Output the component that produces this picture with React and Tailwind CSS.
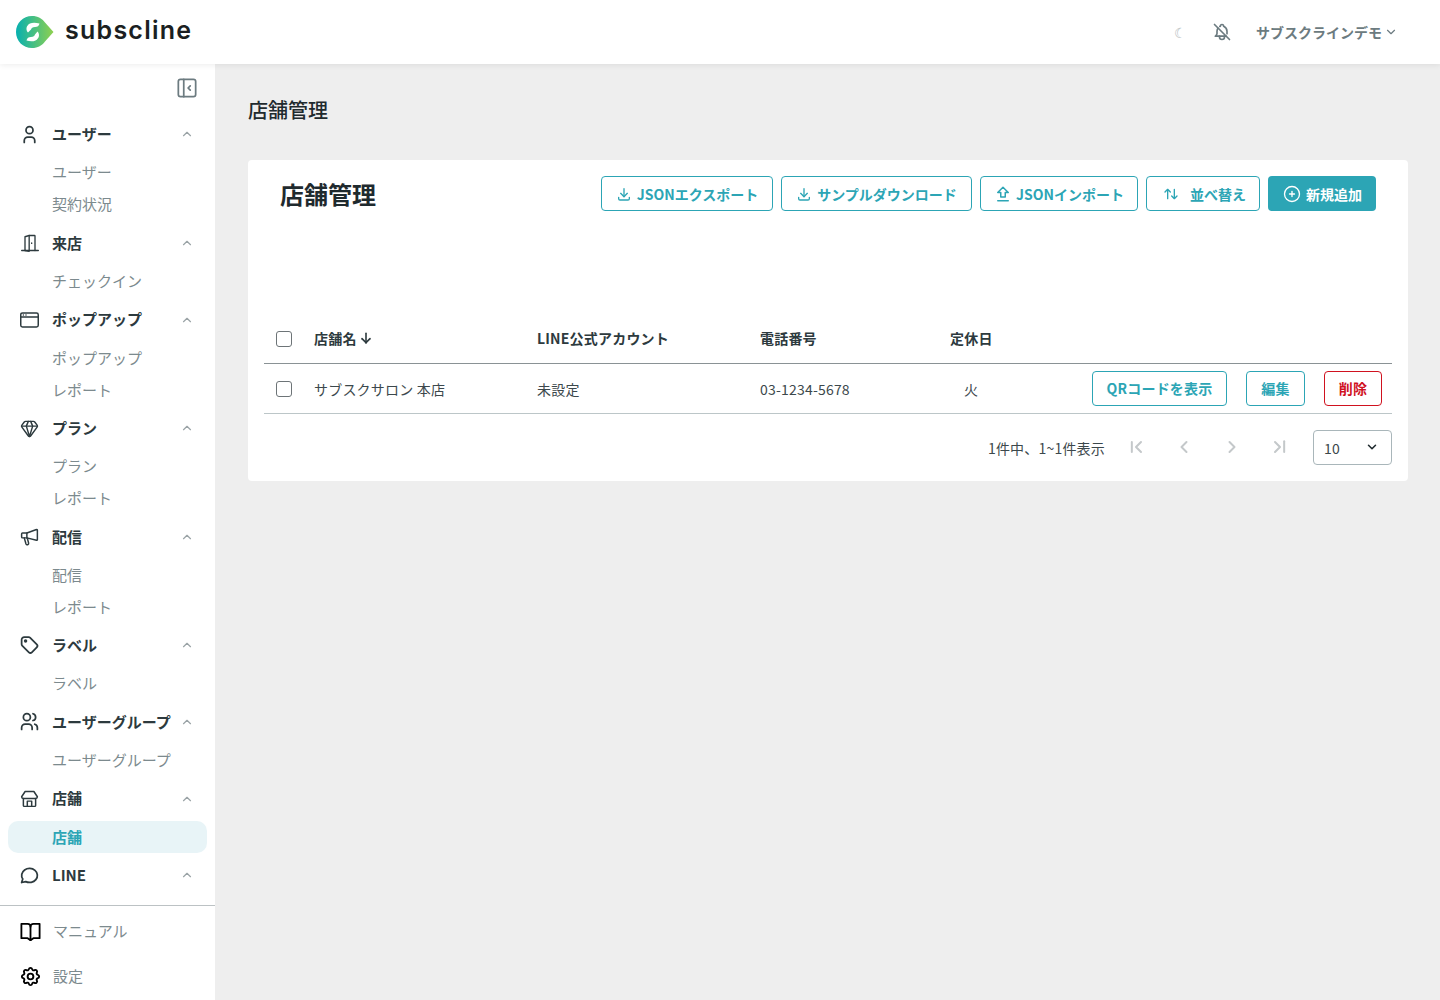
import React from "react"
import {
  TbUser,
  TbTag,
  TbUsers,
  TbMessageCircle,
  TbSettings,
  TbLayoutSidebarLeftCollapse,
  TbBellOff,
  TbChevronUp,
  TbChevronDown,
  TbDownload,
  TbArrowsSort,
  TbCirclePlus,
  TbArrowDown,
  TbChevronLeft,
  TbChevronRight,
  TbChevronLeftPipe,
  TbChevronRightPipe,
} from "react-icons/tb"
import { Gem } from "lucide-react"

const styles = {
  outline: `h-[35px] flex items-center justify-center rounded border border-[#2ca5b5] bg-white text-[#2ca5b5] text-sm font-bold`,
  pager: `w-12 flex justify-center text-[#c4c8ca]`,
}

const Glyph = ({ children, size = 21, stroke = "#2d3a3e", width = 1.7 }) => (
  <svg width={size} height={size} viewBox="0 0 24 24" fill="none" stroke={stroke} strokeWidth={width} strokeLinecap="round" strokeLinejoin="round">
    {children}
  </svg>
)

const DoorIcon = () => (
  <Glyph size={20} width={1.6}>
    <path d="M2 21h20" />
    <path d="M6 21V4.5L11 3h6.5a.5.5 0 0 1 .5.5V21" />
    <path d="M11 3v19l-5-1" />
    <path d="M14 12v.5" />
  </Glyph>
)

const BrowserIcon = () => (
  <Glyph size={22}>
    <rect x="2" y="4" width="20" height="16" rx="2" />
    <path d="M2 8.5h20" />
    <path d="M5 6.3h.01M8 6.3h.01" />
  </Glyph>
)

const MegaphoneIcon = () => (
  <Glyph size={22}>
    <path d="M3 8.5a1 1 0 0 1 1-1h5l11-4a.7.7 0 0 1 1 .7V15a.7.7 0 0 1-1 .7L9 13H4a1 1 0 0 1-1-1Z" />
    <path d="M9 7.5V13" />
    <path d="M6 13l2 7a1.6 1.6 0 0 0 3-1l-1.500-5.500" />
  </Glyph>
)

const StoreIcon = () => (
  <Glyph size={23}>
    <path d="M7 4h10l4 6a2 2 0 0 1-2 2H5a2 2 0 0 1-2-2Z" />
    <path d="M5 12v8a1 1 0 0 0 1 1h12a1 1 0 0 0 1-1v-8" />
    <path d="M9.500 21v-6h5v6" />
  </Glyph>
)

const BookIcon = () => (
  <Glyph size={23} stroke="#000" width={1.9}>
    <path d="M2.500 4h6.500a3 3 0 0 1 3 3 3 3 0 0 1 3-3h6.500v15H15l-3 2-3-2H2.500Z" />
    <path d="M12 7v14" />
  </Glyph>
)

const UploadIcon = () => (
  <Glyph size={18} stroke="currentColor" width={2}>
    <path d="M9 16v-6H5l7-7 7 7h-4v6Z" />
    <path d="M5 21h14" />
  </Glyph>
)

const navGroups = [
  { label: "ユーザー", icon: <TbUser size={21} />, items: ["ユーザー", "契約状況"] },
  { label: "来店", icon: <DoorIcon />, items: ["チェックイン"] },
  { label: "ポップアップ", icon: <BrowserIcon />, items: ["ポップアップ", "レポート"] },
  { label: "プラン", icon: <Gem size={19} strokeWidth={1.8} />, items: ["プラン", "レポート"] },
  { label: "配信", icon: <MegaphoneIcon />, items: ["配信", "レポート"] },
  { label: "ラベル", icon: <TbTag size={22} />, items: ["ラベル"] },
  { label: "ユーザーグループ", icon: <TbUsers size={21} />, items: ["ユーザーグループ"] },
  { label: "店舗", icon: <StoreIcon />, items: ["店舗"], active: "店舗" },
  { label: "LINE", icon: <TbMessageCircle size={21} />, items: [] },
]

const Logo = () => (
  <svg width="38" height="32" viewBox="0 0 38 32">
    <defs>
      <linearGradient id="logoGrad" x1="0" y1="0" x2="1" y2="0">
        <stop offset="0" stopColor="#07b0b0" />
        <stop offset="1" stopColor="#8fd04f" />
      </linearGradient>
    </defs>
    <path d="M16 0C22 0 26 2.500 29 6.500L37.500 16L29 25.500C26 29.500 22 32 16 32C7 32 0 25 0 16S7 0 16 0Z" fill="url(#logoGrad)" />
    <path d="M12 16.500C9.500 14 10 9.500 14 7.500C16.500 6.300 20 6.500 23.500 7.500C23 10 21.500 11 19 11C16.500 11 15.500 12 15 13.500Z" fill="#fff" />
    <path d="M21.500 15.500C24 18 23.500 22.500 19.500 24.500C17 25.700 13.500 25.500 10.500 24.500C11 22 12.500 21 15 21C17.500 21 18.500 20 19 18.500Z" fill="#fff" />
  </svg>
)

const Sidebar = () => (
  <aside className="w-[215px] h-[936px] shrink-0 bg-white flex flex-col overflow-hidden">
    <div className="h-[48.100px] flex items-center justify-end pr-[15px] text-[#6c7b80]">
      <TbLayoutSidebarLeftCollapse size={26} strokeWidth={1.6} />
    </div>
    <nav className="flex-1">
      {navGroups.map((group) => (
        <div key={group.label}>
          <div className="h-[44.600px] flex items-center pl-[19px] pr-[21px] text-[#2d3a3e]">
            <span className="w-[21px] flex justify-center">{group.icon}</span>
            <span className="ml-3 flex-1 text-[15px] font-bold">{group.label}</span>
            <TbChevronUp size={14} className="text-[#9aa3a6]" />
          </div>
          {group.items.map((item) =>
            item === group.active ? (
              <div key={item} className="mx-2 h-8 flex items-center pl-11 rounded-[10px] bg-[#e8f4f7] text-[15px] font-bold text-[#2ca5b5]">
                {item}
              </div>
            ) : (
              <div key={item} className="h-8 flex items-center pl-[52px] text-[15px] text-[#7c8a8e]">
                {item}
              </div>
            ),
          )}
        </div>
      ))}
    </nav>
    <div className="border-t border-[#bcc2c4] pt-[3px] pb-px">
      <div className="h-[45px] flex items-center pl-[19px] text-[15px] text-[#7c8a8e]">
        <BookIcon />
        <span className="ml-[11px]">マニュアル</span>
      </div>
      <div className="h-[45px] flex items-center pl-[19px] text-[15px] text-[#7c8a8e]">
        <TbSettings size={23} className="text-black" />
        <span className="ml-[11px]">設定</span>
      </div>
    </div>
  </aside>
)

const Checkbox = () => <span className="block w-4 h-4 rounded-[3px] border border-[#6d7477] bg-white" />

const App = () => {
  return (
    <div className="w-[1440px] h-[1000px] overflow-hidden bg-[#eeeeee] text-[#2d3a3e] font-['Noto_Sans_CJK_JP','Noto_Sans',sans-serif]">
      <header className="relative z-10 h-16 bg-white shadow-[0_1px_6px_rgba(0,0,0,0.08)] flex items-center pl-4 pr-[42px]">
        <Logo />
        <span className="ml-[11px] -mt-[3px] text-[25px] font-semibold tracking-[1.250px] text-[#1b1f22] font-['Inter',sans-serif]">subscline</span>
        <div className="ml-auto flex items-center text-[#6c7b80]">
          <span className="text-sm text-[#b5bcbe]">☾</span>
          <TbBellOff size={20} className="ml-[25px]" />
          <span className="ml-[24px] -mt-px text-sm font-bold">サブスクラインデモ</span>
          <TbChevronDown size={14} className="ml-[2px]" />
        </div>
      </header>

      <div className="flex">
        <Sidebar />
        <main className="flex-1 px-[33px] pt-[30px]">
          <h1 className="text-xl font-medium text-[#1f2a2e] leading-[32px]">店舗管理</h1>
          <section className="mt-[34px] w-[1160px] h-[321px] bg-white rounded px-4 pt-4">
            <div className="flex items-center pl-4 pr-4">
              <h2 className="text-2xl font-bold text-[#1f2a2e]">店舗管理</h2>
              <div className="ml-auto flex gap-2">
                <button className={`${styles.outline} w-[172px] gap-[5px]`}>
                  <TbDownload size={16} />
                  JSONエクスポート
                </button>
                <button className={`${styles.outline} w-[191px] gap-[5px]`}>
                  <TbDownload size={16} />
                  サンプルダウンロード
                </button>
                <button className={`${styles.outline} w-[158px] gap-[4px]`}>
                  <UploadIcon />
                  JSONインポート
                </button>
                <button className={`${styles.outline} w-[114px] !justify-start pl-4 gap-[11px]`}>
                  <TbArrowsSort size={16} />
                  並べ替え
                </button>
                <button className="h-[35px] w-[108px] flex items-center justify-center gap-[4px] rounded bg-[#2ca5b5] text-white text-sm font-bold">
                  <TbCirclePlus size={20} strokeWidth={1.6} />
                  新規追加
                </button>
              </div>
            </div>

            <table className="mt-[104px] w-[1128px] table-fixed text-sm tracking-[0.2px]">
              <thead>
                <tr className="h-[48px] border-b border-[#8a9295] text-[#2d3a3e]">
                  <th className="w-[50px] pl-3"><Checkbox /></th>
                  <th className="w-[223px] pb-px text-left font-bold">
                    <span className="flex items-center gap-px">店舗名 <TbArrowDown size={16} strokeWidth={2.4} /></span>
                  </th>
                  <th className="w-[223px] pb-px text-left font-bold">LINE公式アカウント</th>
                  <th className="w-[190px] pb-px text-left font-bold">電話番号</th>
                  <th className="w-[42px] pb-px text-left font-bold whitespace-nowrap">定休日</th>
                  <th />
                </tr>
              </thead>
              <tbody>
                <tr className="h-[50px] border-b border-[#bcc6c8] text-[#3c484c]">
                  <td className="pl-3 pt-[2px]"><Checkbox /></td>
                  <td className="pt-px">サブスクサロン 本店</td>
                  <td className="pt-px">未設定</td>
                  <td className="pt-px">03-1234-5678</td>
                  <td className="pt-px text-center">火</td>
                  <td>
                    <div className="flex justify-end gap-[19px] pr-[10px]">
                      <button className={`${styles.outline} w-[135px]`}>QRコードを表示</button>
                      <button className={`${styles.outline} w-[59px]`}>編集</button>
                      <button className="h-[35px] w-[58px] rounded border border-[#d0121f] text-[#d0121f] text-sm font-bold">削除</button>
                    </div>
                  </td>
                </tr>
              </tbody>
            </table>

            <div className="mt-4 w-[1128px] flex items-center justify-end text-sm tracking-[0.2px] text-[#3c484c]">
              <span className="pt-px">1件中、1~1件表示</span>
              <div className="ml-[7px] flex">
                <span className={styles.pager}><TbChevronLeftPipe size={20} strokeWidth={2.4} /></span>
                <span className={styles.pager}><TbChevronLeft size={20} strokeWidth={2.4} /></span>
                <span className={styles.pager}><TbChevronRight size={20} strokeWidth={2.4} /></span>
                <span className={styles.pager}><TbChevronRightPipe size={20} strokeWidth={2.4} /></span>
              </div>
              <div className="ml-[9px] w-[79px] h-[35px] flex items-center justify-between pl-[10px] pr-3 rounded border border-[#a9b6ba]">
                <span className="pt-px">10</span>
                <TbChevronDown size={14} strokeWidth={2.6} className="text-[#1f2a2e]" />
              </div>
            </div>
          </section>
        </main>
      </div>
    </div>
  )
}

export default App
